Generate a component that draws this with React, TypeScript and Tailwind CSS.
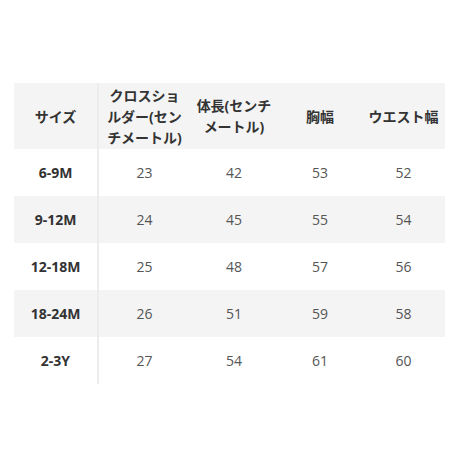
const HEADERS = ["サイズ", "クロスショルダー(センチメートル)", "体長(センチメートル)", "胸幅", "ウエスト幅"];

const ROWS: [string, number, number, number, number][] = [
  ["6-9M", 23, 42, 53, 52],
  ["9-12M", 24, 45, 55, 54],
  ["12-18M", 25, 48, 57, 56],
  ["18-24M", 26, 51, 59, 58],
  ["2-3Y", 27, 54, 61, 60],
];

export default function App() {
  return (
    <div
      className="w-[460px] h-[460px] bg-white pt-[83px] pl-[14px]"
      style={{ fontFamily: '"Open Sans", "Noto Sans CJK JP", sans-serif' }}
    >
      <table className="table-fixed border-collapse w-[431px]">
        <colgroup>
          <col className="w-[84px]" />
          <col className="w-[92px]" />
          <col className="w-[88px]" />
          <col className="w-[84px]" />
          <col className="w-[83px]" />
        </colgroup>
        <thead>
          <tr className="bg-[#f4f4f4] h-[66px]">
            {HEADERS.map((h, i) => (
              <th
                key={h}
                className={
                  "px-[5px] py-0 text-center text-[14px] leading-[21px] font-bold text-[#333] break-all " +
                  (i === 0 ? "border-r-2 border-[#ececec]" : "")
                }
              >
                {h}
              </th>
            ))}
          </tr>
        </thead>
        <tbody>
          {ROWS.map((r, ri) => (
            <tr key={r[0]} className={(ri % 2 === 1 ? "bg-[#f4f4f4] " : "") + "h-[47px]"}>
              <td className="border-r-2 border-[#ececec] text-center text-[14px] font-bold text-[#333]">{r[0]}</td>
              {r.slice(1).map((v, ci) => (
                <td key={ci} className="text-center text-[14px] text-[#555]">
                  {v}
                </td>
              ))}
            </tr>
          ))}
        </tbody>
      </table>
    </div>
  );
}
